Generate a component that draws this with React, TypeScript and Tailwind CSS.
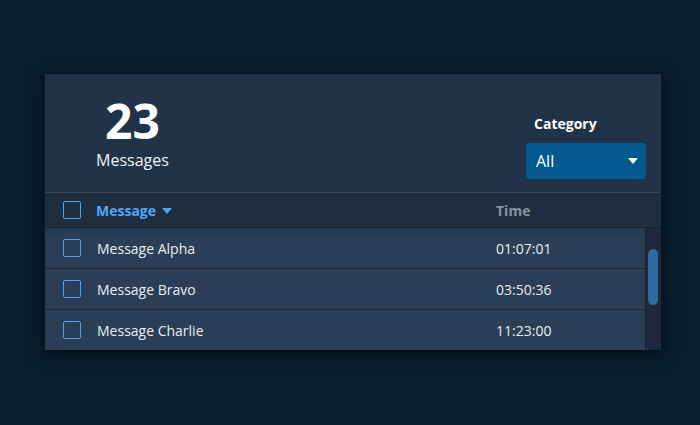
import React from 'react';

const rows = [
  { name: 'Message Alpha', time: '01:07:01' },
  { name: 'Message Bravo', time: '03:50:36' },
  { name: 'Message Charlie', time: '11:23:00' },
];

function Box() {
  return <div className="w-[18px] h-[18px] rounded-[2px] border border-[#4aa3f2] shrink-0" />;
}

function Caret({ className }: { className?: string }) {
  return (
    <svg width="10" height="6" viewBox="0 0 10 6" className={className}>
      <path d="M0 0h10L5 6z" fill="currentColor" />
    </svg>
  );
}

export default function App() {
  return (
    <div
      className="w-[700px] h-[425px] bg-[#081d2d] pt-[74px] pl-[45px]"
      style={{ fontFamily: '"Open Sans", "Liberation Sans", sans-serif' }}
    >
      <div className="w-[616px] bg-[#203348] shadow-[0_4px_14px_rgba(0,0,0,0.55)]">
        {/* Summary */}
        <div className="h-[118px] flex justify-between">
          <div className="w-[175px] flex flex-col items-center pt-[24px] text-white">
            <div className="text-[48px] font-bold leading-[46px]">23</div>
            <div className="text-[16px] leading-[22px] mt-[5px] text-[#eef2f6]">Messages</div>
          </div>
          <div className="w-[135px] pr-[15px] pt-[40px] flex flex-col items-start">
            <div className="text-[14px] font-bold text-white leading-[20px] pl-[8px]">Category</div>
            <div className="mt-[9px] w-[120px] h-[36px] bg-[#02598d] rounded-[3px] flex items-center justify-between pl-[10px] pr-[8px] text-white">
              <span className="text-[16px]">All</span>
              <Caret className="text-white" />
            </div>
          </div>
        </div>
        <div className="h-px bg-[#34485d]" />

        {/* Header */}
        <div className="h-[35px] bg-[#1f2d3f] flex items-center pl-[18px] border-b border-[#18222f]">
          <Box />
          <div className="ml-[15px] w-[400px] flex items-center gap-[6px] text-[#4ea8f7] text-[14px] font-bold">
            Message
            <Caret className="text-[#4ea8f7] mt-[1px]" />
          </div>
          <div className="text-[14px] font-bold text-[#8793a0]">Time</div>
        </div>

        {/* Rows */}
        <div className="flex">
          <div className="flex-1">
            {rows.map((r, i) => (
              <div
                key={r.name}
                className={`flex items-center pl-[18px] bg-[#2a3f56] ${i === 0 ? 'bg-gradient-to-b from-[#243850] to-[#2a3f56] to-[30%]' : ''} ${i < rows.length - 1 ? 'h-[41px] border-b border-[#1b2838]' : 'h-[40px]'}`}
              >
                <Box />
                <div className="ml-[16px] w-[399px] text-[14px] text-[#e8edf2]">{r.name}</div>
                <div className="text-[14px] text-[#e8edf2]">{r.time}</div>
              </div>
            ))}
          </div>
          <div className="w-[16px] bg-[#1e2a3b] border-l border-[#18222f] pt-[21px] pl-[2px]">
            <div className="w-[10px] h-[56px] rounded-full bg-[#2e69a0]" />
          </div>
        </div>
      </div>
    </div>
  );
}
